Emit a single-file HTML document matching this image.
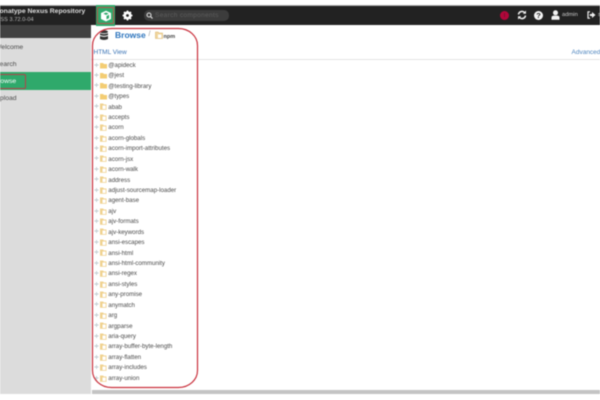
<!DOCTYPE html>
<html><head><meta charset="utf-8"><style>
html,body{margin:0;padding:0;background:#fff}
body{width:600px;height:400px;overflow:hidden;position:relative;font-family:"Liberation Sans",sans-serif}
#p{position:absolute;left:0;top:0;width:600px;height:400px;overflow:hidden;filter:blur(.45px)}
.a{position:absolute;white-space:nowrap}
.r{position:absolute;left:94px;height:10px;width:95px}
.r svg{position:absolute;left:0;top:-.5px}
.r span{position:absolute;left:14.3px;top:.8px;line-height:10px;font-size:6.15px;color:#4a4a4a;white-space:nowrap}
.s{font-size:6.8px;color:#4a4a4a;left:-5px}
</style></head><body><div id="p">
<svg width="0" height="0" style="position:absolute"><defs>
<symbol id="f" viewBox="0 0 16 10"><path d="M.5 5H4.500M2.500 3V7" stroke="#c2ccd0" stroke-width=".9"/><path d="M6 3H9L10 4H13V8.500H6z" fill="#f3cd74"/></symbol>
<symbol id="g" viewBox="0 0 16 10"><path d="M.5 5H4.500M2.500 3V7" stroke="#c2ccd0" stroke-width=".9"/><path d="M6 2.500H9L10 3.500H12.500V8.800H6z" fill="#f0d28f"/><rect x="8.500" y="4.500" width="3.200" height="3.500" fill="#fff"/></symbol>
</defs></svg>
<div class="a" style="left:0;top:5px;width:600px;height:20px;background:#222;border-top:1px solid #aaa;box-sizing:border-box"></div>
<div class="a" style="left:-5px;top:8px;font-size:6.800px;font-weight:bold;color:#ddd">Sonatype Nexus Repository</div>
<div class="a" style="left:-4px;top:16.500px;font-size:5.500px;color:#bbb;letter-spacing:.1px">OSS 3.72.0-04</div>
<div class="a" style="left:96px;top:5px;width:19px;height:21px;background:#2fa96b"></div>
<div class="a" style="left:97px;top:7px;width:17px;height:17px;border:1px solid #b5524a;box-sizing:border-box;border-radius:1px"></div>
<svg class="a" style="left:100px;top:9.500px" width="12" height="12" viewBox="0 0 12 12"><path d="M6 .8 11 3v6l-5 2.400L1 9V3z" fill="#fff"/><path d="M6 5 8.600 3.600 6 2.500 3.400 3.600zM6.500 6v3.400l2.600-1.300V4.700z" fill="#2fa96b"/></svg>
<svg class="a" style="left:122px;top:10px" width="11" height="11" viewBox="0 0 11 11"><circle cx="5.500" cy="5.500" r="3" fill="none" stroke="#fff" stroke-width="2.200"/><path d="M5.500 .5v10M.5 5.500h10M2 2l7 7M9 2l-7 7" stroke="#fff" stroke-width="1.600"/><circle cx="5.500" cy="5.500" r="1.400" fill="#222"/></svg>
<div class="a" style="left:144px;top:10px;width:85px;height:11px;background:#3c3c3c;border-radius:5px"></div>
<svg class="a" style="left:146px;top:12px" width="7" height="7" viewBox="0 0 7 7"><circle cx="3" cy="3" r="2" fill="none" stroke="#ddd" stroke-width="1.100"/><path d="M4.500 4.500 6.500 6.500" stroke="#ddd" stroke-width="1.200"/></svg>
<div class="a" style="left:155px;top:11px;font-size:6.600px;line-height:9px;color:#5e5e5e;letter-spacing:.3px">Search components</div>
<div class="a" style="left:500px;top:10.500px;width:9px;height:9px;background:#b0063a;border-radius:50%"></div>
<div class="a" style="left:504px;top:13px;width:1px;height:4px;background:#7a1030"></div>
<svg class="a" style="left:516.500px;top:10px" width="10" height="10" viewBox="0 0 10 10" fill="none" stroke="#eee" stroke-width="1.500"><path d="M1.500 4.500A3.500 3.500 0 0 1 7.500 2.500M8.500 5.500A3.500 3.500 0 0 1 2.500 7.500"/><path d="M9 .5v3.200H5.800zM1 9.500V6.300h3.200z" fill="#eee" stroke="none"/></svg>
<div class="a" style="left:534px;top:10.500px;width:9px;height:9px;background:#f4f4f4;border-radius:50%;color:#222;font:bold 7.500px/9px 'Liberation Sans',sans-serif;text-align:center">?</div>
<svg class="a" style="left:551px;top:10px" width="9" height="10" viewBox="0 0 9 10"><circle cx="4.500" cy="2.800" r="2.500" fill="#f2f2f2"/><path d="M.5 9.800V7.500Q.5 5.800 2.500 5.600H6.500Q8.500 5.800 8.500 7.500V9.800z" fill="#f2f2f2"/></svg>
<div class="a" style="left:562px;top:11px;font-size:5.800px;line-height:9px;color:#ccc">admin</div>
<svg class="a" style="left:587px;top:11px" width="9" height="8" viewBox="0 0 9 8"><path d="M3 .8H1V7.200H3" fill="none" stroke="#eee" stroke-width="1.200"/><path d="M2.800 3H5V1L8.500 4 5 7V5H2.800z" fill="#eee"/></svg>
<div class="a" style="left:598px;top:11px;font-size:5.800px;line-height:9px;color:#ccc">s</div>
<div class="a" style="left:0;top:25px;width:91px;height:369px;background:#dcdcdc"></div>
<div class="a" style="left:0;top:25px;width:91px;height:13px;background:#414141"></div>
<div class="a" style="left:0;top:72px;width:91px;height:18px;background:#2fa96b"></div>
<div class="a" style="left:-3px;top:73.500px;width:28.500px;height:15px;border:1.200px solid #b5404a;border-radius:2px;box-sizing:border-box"></div>
<div class="a s" style="top:43.500px">Welcome</div>
<div class="a s" style="top:60.500px">Search</div>
<div class="a s" style="top:77.500px;left:-6.500px;color:#fff">Browse</div>
<div class="a s" style="top:94.500px">Upload</div>
<svg class="a" style="left:98px;top:30px" width="12" height="11" viewBox="0 0 12 11" fill="#333"><ellipse cx="6" cy="1.800" rx="4" ry="1.500"/><path d="M2 3.200Q6 5 10 3.200V5Q6 6.800 2 5zM2 6Q6 7.800 10 6V9Q6 11 2 9z"/></svg>
<div class="a" style="left:115px;top:30px;font-size:8.500px;font-weight:bold;color:#2d74bd">Browse</div>
<div class="a" style="left:148.500px;top:31px;font-size:7px;color:#999">/</div>
<svg class="a" style="left:155px;top:31px" width="8" height="8" viewBox="0 0 8 8"><path d="M.5 1H3L4 2H7.500V7.500H.5z" fill="#f1d7a0" stroke="#d9b36a" stroke-width=".6"/><rect x="3" y="3.500" width="3.500" height="3.500" fill="#fff"/></svg>
<div class="a" style="left:163.500px;top:34px;font-size:5.500px;line-height:7px;font-weight:bold;color:#444">npm</div>
<div class="a" style="left:93.500px;top:48.500px;font-size:6.500px;color:#3b74b5">HTML View</div>
<div class="a" style="left:571.500px;top:48.500px;font-size:6.500px;color:#4f86bf">Advanced</div>
<div class="a" style="left:91px;top:59px;width:509px;height:1px;background:#e4e4e4"></div>
<div class="r" style="top:60px"><svg width="16" height="10"><use href="#f"/></svg><span>@apideck</span></div>
<div class="r" style="top:70.430px"><svg width="16" height="10"><use href="#f"/></svg><span>@jest</span></div>
<div class="r" style="top:80.870px"><svg width="16" height="10"><use href="#f"/></svg><span>@testing-library</span></div>
<div class="r" style="top:91.300px"><svg width="16" height="10"><use href="#f"/></svg><span>@types</span></div>
<div class="r" style="top:101.730px"><svg width="16" height="10"><use href="#g"/></svg><span>abab</span></div>
<div class="r" style="top:112.170px"><svg width="16" height="10"><use href="#g"/></svg><span>accepts</span></div>
<div class="r" style="top:122.600px"><svg width="16" height="10"><use href="#g"/></svg><span>acorn</span></div>
<div class="r" style="top:133.030px"><svg width="16" height="10"><use href="#g"/></svg><span>acorn-globals</span></div>
<div class="r" style="top:143.470px"><svg width="16" height="10"><use href="#g"/></svg><span>acorn-import-attributes</span></div>
<div class="r" style="top:153.900px"><svg width="16" height="10"><use href="#g"/></svg><span>acorn-jsx</span></div>
<div class="r" style="top:164.330px"><svg width="16" height="10"><use href="#g"/></svg><span>acorn-walk</span></div>
<div class="r" style="top:174.770px"><svg width="16" height="10"><use href="#g"/></svg><span>address</span></div>
<div class="r" style="top:185.200px"><svg width="16" height="10"><use href="#g"/></svg><span>adjust-sourcemap-loader</span></div>
<div class="r" style="top:195.630px"><svg width="16" height="10"><use href="#g"/></svg><span>agent-base</span></div>
<div class="r" style="top:206.070px"><svg width="16" height="10"><use href="#g"/></svg><span>ajv</span></div>
<div class="r" style="top:216.500px"><svg width="16" height="10"><use href="#g"/></svg><span>ajv-formats</span></div>
<div class="r" style="top:226.930px"><svg width="16" height="10"><use href="#g"/></svg><span>ajv-keywords</span></div>
<div class="r" style="top:237.370px"><svg width="16" height="10"><use href="#g"/></svg><span>ansi-escapes</span></div>
<div class="r" style="top:247.800px"><svg width="16" height="10"><use href="#g"/></svg><span>ansi-html</span></div>
<div class="r" style="top:258.230px"><svg width="16" height="10"><use href="#g"/></svg><span>ansi-html-community</span></div>
<div class="r" style="top:268.670px"><svg width="16" height="10"><use href="#g"/></svg><span>ansi-regex</span></div>
<div class="r" style="top:279.100px"><svg width="16" height="10"><use href="#g"/></svg><span>ansi-styles</span></div>
<div class="r" style="top:289.530px"><svg width="16" height="10"><use href="#g"/></svg><span>any-promise</span></div>
<div class="r" style="top:299.970px"><svg width="16" height="10"><use href="#g"/></svg><span>anymatch</span></div>
<div class="r" style="top:310.400px"><svg width="16" height="10"><use href="#g"/></svg><span>arg</span></div>
<div class="r" style="top:320.830px"><svg width="16" height="10"><use href="#g"/></svg><span>argparse</span></div>
<div class="r" style="top:331.270px"><svg width="16" height="10"><use href="#g"/></svg><span>aria-query</span></div>
<div class="r" style="top:341.700px"><svg width="16" height="10"><use href="#g"/></svg><span>array-buffer-byte-length</span></div>
<div class="r" style="top:352.130px"><svg width="16" height="10"><use href="#g"/></svg><span>array-flatten</span></div>
<div class="r" style="top:362.570px"><svg width="16" height="10"><use href="#g"/></svg><span>array-includes</span></div>
<div class="r" style="top:373px"><svg width="16" height="10"><use href="#g"/></svg><span>array-union</span></div>
<div class="a" style="left:92px;top:390px;width:508px;height:4px;background:#c4c4c4"></div>
<svg class="a" style="left:88px;top:25px" width="115" height="365" viewBox="0 0 115 365"><rect x="4.500" y="3.500" width="105" height="359" rx="19" ry="17" fill="none" stroke="#c9303c" stroke-width="1.200"/></svg>
</div></body></html>
